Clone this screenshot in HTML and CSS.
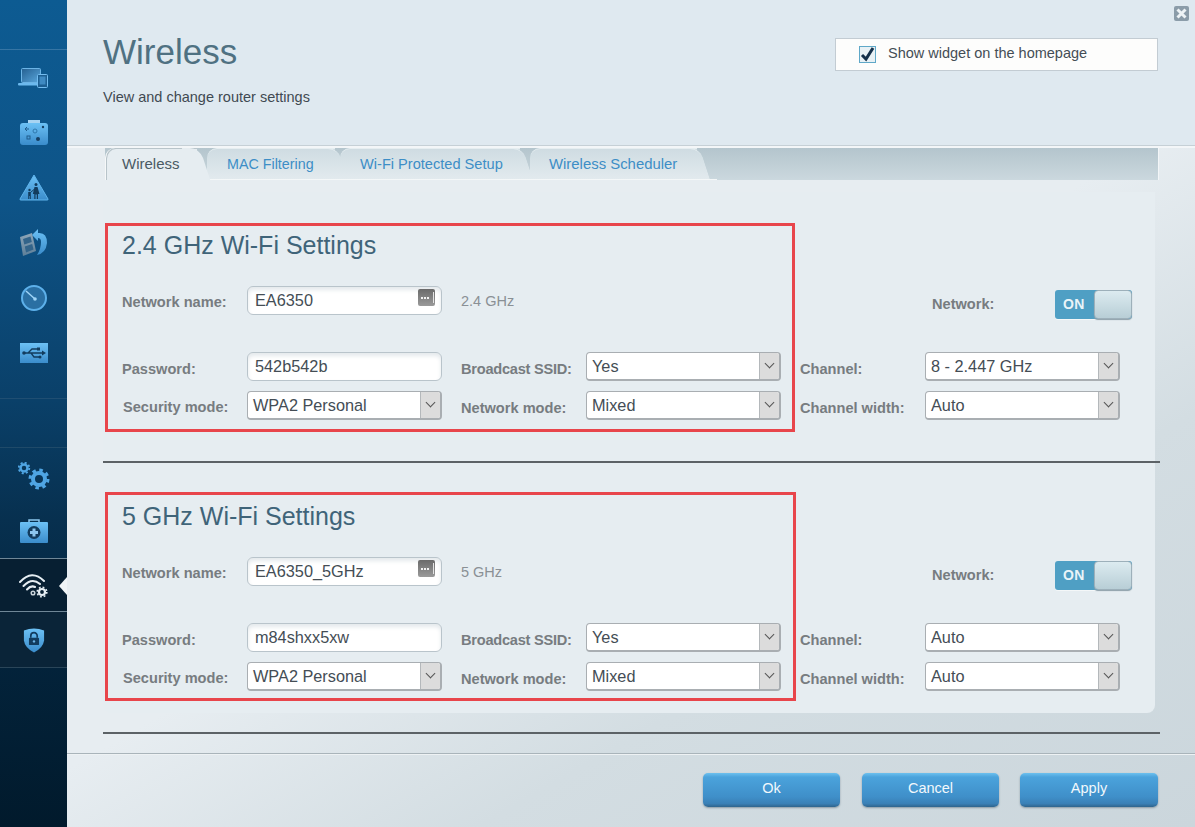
FILE: index.html
```html
<!DOCTYPE html>
<html lang="en">
<head>
<meta charset="UTF-8" />
<meta name="viewport" content="width=device-width, initial-scale=1" />
<title>Wireless</title>
<link rel="stylesheet" href="styles.css">
</head>
<body>

<div class="app">
  <nav class="sidebar">
    <svg class="defs" width="0" height="0">
      <defs>
        <linearGradient id="blue" x1="0" y1="0" x2="0" y2="1">
          <stop offset="0" stop-color="#6cc1f5"/>
          <stop offset="1" stop-color="#3a8ccb"/>
        </linearGradient>
        <linearGradient id="gray" x1="0" y1="0" x2="0" y2="1">
          <stop offset="0" stop-color="#8fa6b8"/>
          <stop offset="1" stop-color="#5d7f99"/>
        </linearGradient>
        <linearGradient id="screen" x1="0" y1="0" x2="1" y2="1">
          <stop offset="0" stop-color="#245f90"/>
          <stop offset="1" stop-color="#5ba8de"/>
        </linearGradient>
      </defs>
    </svg>
    <div class="nav-top"></div>

    <div class="nav-item">
      <svg width="32" height="20" viewBox="0 0 32 20">
        <rect x="3.500" y="0.500" width="19" height="14" rx="1" fill="url(#screen)" stroke="#6cb4e6"/>
        <rect x="0" y="15" width="26" height="2.500" rx="1" fill="#6cb9ee"/>
        <rect x="19.500" y="6.500" width="10" height="13" rx="1" fill="#1d5f92" stroke="#74bdf0"/>
        <rect x="21.500" y="8.500" width="6" height="8" fill="#3f8ac2"/>
      </svg>
    </div>
    <div class="nav-item">
      <svg width="30" height="26" viewBox="0 0 30 26">
        <rect x="9" y="0" width="12" height="4" fill="#a8d4f2"/>
        <rect x="1" y="3" width="28" height="22" rx="3" fill="url(#blue)"/>
        <path d="M6 9 H10 M8 7 L6 9 L8 11" fill="none" stroke="#1f5c8c"/>
        <circle cx="24" cy="7" r="1.200" fill="#163f63"/>
        <circle cx="16" cy="11" r="2" fill="none" stroke="#2f78ad"/>
        <rect x="8" y="16" width="3" height="3" fill="none" stroke="#1f5c8c"/>
        <circle cx="19" cy="19" r="2" fill="#163f63"/>
      </svg>
    </div>
    <div class="nav-item">
      <svg width="30" height="27" viewBox="0 0 30 27">
        <path d="M15 1 L29 25 Q29.500 26 28 26 L2 26 Q0.500 26 1 25 Z" fill="url(#blue)" stroke="#5eb3ec" stroke-linejoin="round"/>
        <circle cx="17" cy="10.500" r="1.500" fill="#123c5e"/>
        <path d="M15.500 13 H18.500 L20.500 20 H19 V25 H17.800 V20.500 H16.500 V25 H15.300 V20 H13.800 Z" fill="#123c5e"/>
        <circle cx="10.500" cy="16" r="1.200" fill="#123c5e"/>
        <path d="M9.200 18 H11.800 V25 H10.800 V22 H10.200 V25 H9.200 Z" fill="#123c5e"/>
        <path d="M11.500 18.500 L15 15.500" stroke="#123c5e"/>
      </svg>
    </div>
    <div class="nav-item">
      <svg width="30" height="28" viewBox="0 0 30 28">
        <path d="M1 8 L13 4 L17 22 L4 27 Z" fill="url(#gray)"/>
        <path d="M4 10 L11.500 7.500 L12.800 13 L5.300 15.500 Z M5.800 17.500 L13.200 15 L14.500 20.500 L7 23.500 Z" fill="#33648a"/>
        <path d="M19 4 Q28 3 28 14 Q27 24 18 26 Q22 20 22 13 Q22 9 19 9 V12 L13 6 L19 0 Z" fill="url(#blue)"/>
      </svg>
    </div>
    <div class="nav-item">
      <svg width="28" height="28" viewBox="0 0 28 28">
        <circle cx="14" cy="14" r="12" fill="#2a6fa3" stroke="#5db0ea" stroke-width="2"/>
        <path d="M6 7 L15 15" stroke="#9fd4f7" stroke-width="1.500"/>
        <circle cx="15" cy="15" r="1.800" fill="#9fd4f7"/>
      </svg>
    </div>
    <div class="nav-item">
      <svg width="28" height="20" viewBox="0 0 28 20">
        <rect x="0" y="0" width="28" height="20" fill="url(#blue)"/>
        <path d="M3 10 H24 M8 10 L12 6 H17 M11 10 L14 14 H19" stroke="#123c5e" stroke-width="1.300" fill="none"/>
        <path d="M22 7.500 L26 10 L22 12.500 Z" fill="#123c5e"/>
        <circle cx="4" cy="10" r="1.800" fill="#123c5e"/>
        <rect x="17" y="4.500" width="3" height="3" fill="#123c5e"/>
        <circle cx="20" cy="14" r="1.500" fill="#123c5e"/>
      </svg>
    </div>

    <div class="nav-gap"></div>

    <div class="nav-item nav-item-tall">
      <svg width="32" height="28" viewBox="0 0 32 28">
        <circle cx="6" cy="6" r="3.500" fill="none" stroke="#4fa5e3" stroke-width="2.500"/>
        <circle cx="6" cy="6" r="5.300" fill="none" stroke="#4fa5e3" stroke-width="1.800" stroke-dasharray="2.100 2.060"/>
        <circle cx="21" cy="17" r="6" fill="none" stroke="#4fa5e3" stroke-width="4"/>
        <circle cx="21" cy="17" r="9" fill="none" stroke="#4fa5e3" stroke-width="3" stroke-dasharray="3.500 3.570"/>
      </svg>
    </div>
    <div class="nav-item">
      <svg width="28" height="24" viewBox="0 0 28 24">
        <path d="M9 4 V1 H19 V4" fill="none" stroke="#8cc6ee" stroke-width="1.500"/>
        <rect x="0" y="3" width="28" height="21" rx="1" fill="url(#blue)"/>
        <circle cx="14" cy="13.500" r="6.500" fill="#123c5e"/>
        <path d="M12.500 9.500 H15.500 V12 H18 V15 H15.500 V17.500 H12.500 V15 H10 V12 H12.500 Z" fill="#8cc6ee"/>
      </svg>
    </div>
    <div class="nav-item nav-item-active">
      <svg width="30" height="26" viewBox="0 0 30 26">
        <path d="M1 10 Q13 -3 25 9 M4.500 14 Q13 5 21 12 M8 17.500 Q12 13 16 15" fill="none" stroke="#e6eef3" stroke-width="2" stroke-linecap="round"/>
        <circle cx="14" cy="21" r="1.800" fill="none" stroke="#c9d3da" stroke-width="1.500"/>
        <circle cx="23" cy="20" r="3" fill="none" stroke="#e6eef3" stroke-width="2.200"/>
        <circle cx="23" cy="20" r="4.800" fill="none" stroke="#e6eef3" stroke-width="1.600" stroke-dasharray="1.800 1.970"/>
      </svg>
      <span class="nav-pointer"></span>
    </div>
    <div class="nav-item nav-item-dark">
      <svg width="22" height="26" viewBox="0 0 24 27">
        <path d="M1 3 Q12 -1 23 3 V14 Q22 22 12 27 Q2 22 1 14 Z" fill="url(#blue)"/>
        <path d="M8.500 11 V9 A3.500 3.500 0 0 1 15.500 9 V11" fill="none" stroke="#123c5e" stroke-width="1.800"/>
        <rect x="6.500" y="11" width="11" height="8" rx="1" fill="#123c5e"/>
        <circle cx="12" cy="15" r="1.300" fill="#6cb4e6"/>
      </svg>
    </div>
  </nav>

  <div class="main">
    <header class="head">
      <div class="head-text">
        <h1>Wireless</h1>
        <p>View and change router settings</p>
      </div>
      <label class="widget-box">
        <span class="checkbox">
          <svg width="17" height="17" viewBox="0 0 17 17">
            <path d="M3 9 L7 13 L14 2" fill="none" stroke="#14304a" stroke-width="3"/>
          </svg>
        </span>
        Show widget on the homepage
      </label>
      <div class="close">
        <svg width="15" height="15" viewBox="0 0 15 15">
          <path d="M3.500 3.500 L11.500 11.500 M11.500 3.500 L3.500 11.500" stroke="#eef3f6" stroke-width="3"/>
        </svg>
      </div>
    </header>

    <div class="tabs">
      <a class="tab tab-active">Wireless</a>
      <a class="tab tab-mac">MAC Filtering</a>
      <a class="tab tab-wps">Wi-Fi Protected Setup</a>
      <a class="tab tab-sched">Wireless Scheduler</a>
    </div>

    <div class="panel">
      <section class="wifi wifi-first">
        <div class="mark mark-first"></div>
        <h2>2.4 GHz Wi-Fi Settings</h2>
        <div class="form-grid">
          <label class="lbl lbl-up">Network name:</label>
          <div class="text-field">
            <input type="text" value="EA6350">
            <span class="key-icon"><i></i><i></i><i></i><u></u></span>
          </div>
          <span class="band">2.4 GHz</span>
          <span></span>
          <span></span>
          <div class="net-toggle">
            <span class="lbl">Network:</span>
            <div class="toggle"><b>ON</b><span class="knob"></span></div>
          </div>

          <label class="lbl">Password:</label>
          <div class="text-field"><input type="text" value="542b542b"></div>
          <label class="lbl lbl-tight">Broadcast SSID:</label>
          <div class="select"><span>Yes</span><em></em></div>
          <label class="lbl">Channel:</label>
          <div class="select"><span>8 - 2.447 GHz</span><em></em></div>

          <label class="lbl lbl-up lbl-sec">Security mode:</label>
          <div class="select"><span>WPA2 Personal</span><em></em></div>
          <label class="lbl">Network mode:</label>
          <div class="select"><span>Mixed</span><em></em></div>
          <label class="lbl">Channel width:</label>
          <div class="select"><span>Auto</span><em></em></div>
        </div>
      </section>

      <hr class="rule">

      <section class="wifi">
        <div class="mark mark-second"></div>
        <h2>5 GHz Wi-Fi Settings</h2>
        <div class="form-grid">
          <label class="lbl lbl-up">Network name:</label>
          <div class="text-field">
            <input type="text" value="EA6350_5GHz">
            <span class="key-icon"><i></i><i></i><i></i><u></u></span>
          </div>
          <span class="band">5 GHz</span>
          <span></span>
          <span></span>
          <div class="net-toggle">
            <span class="lbl">Network:</span>
            <div class="toggle"><b>ON</b><span class="knob"></span></div>
          </div>

          <label class="lbl">Password:</label>
          <div class="text-field"><input type="text" value="m84shxx5xw"></div>
          <label class="lbl lbl-tight">Broadcast SSID:</label>
          <div class="select"><span>Yes</span><em></em></div>
          <label class="lbl">Channel:</label>
          <div class="select"><span>Auto</span><em></em></div>

          <label class="lbl lbl-up lbl-sec">Security mode:</label>
          <div class="select"><span>WPA2 Personal</span><em></em></div>
          <label class="lbl">Network mode:</label>
          <div class="select"><span>Mixed</span><em></em></div>
          <label class="lbl">Channel width:</label>
          <div class="select"><span>Auto</span><em></em></div>
        </div>
      </section>
    </div>

    <hr class="rule rule-last">

    <footer class="foot">
      <button class="btn-ok">Ok</button>
      <button>Cancel</button>
      <button class="btn-apply">Apply</button>
    </footer>
  </div>
</div>

</body>
</html>
```

FILE: styles.css
```css
* { box-sizing: border-box; }
html, body { margin: 0; height: 100%; overflow: hidden; }
body { font-family: "Liberation Sans", Arial, sans-serif; color: #444d55; background: #e5ecf0; }

.app { display: flex; width: 1195px; height: 827px; }

/* left nav */
.sidebar { width: 67px; flex: none; display: flex; flex-direction: column; background: linear-gradient(#0d5b92 0, #0e5488 200px, #0a4069 400px, #07304f 520px, #03233b 660px, #011a2c 827px); }
.defs { display: block; }
.nav-top { height: 50px; border-bottom: 1px solid #3675a4; }
.nav-item { height: 55px; display: flex; align-items: center; justify-content: center; position: relative; }
.nav-gap { height: 19px; border-bottom: 1px solid #1f4e72; margin-bottom: 48px; }
.nav-item-tall { height: 56px; border-top: 1px solid #1f4a69; }
.nav-item-active { height: 54px; background: #071f32; border-top: 1px solid #6f8797; border-bottom: 1px solid #6f8797; }
.nav-item-dark { height: 56px; background: #0a2438; border-bottom: 1px solid #2a4558; }
.nav-pointer { position: absolute; right: 0; top: 18px; border: 9px solid transparent; border-left: 0; border-right: 8px solid #f0f4f6; }

/* main column */
.main { flex: 1; padding: 0 35px 0 36px; background: linear-gradient(150deg, #e7edf1 52%, #d3dde2 72%, #cbd6dc 100%); display: flex; flex-direction: column; }

.head { margin: 0 -35px 0 -36px; padding-left: 36px; height: 148px; flex: none; display: flex; align-items: flex-start; background: #dfe9f0; border-bottom: 2px solid #f3f6f8; box-shadow: inset 0 -1px 0 #c6d0d6; }
.head-text { flex: 1; }
.head h1 { margin: 32px 0 0; font-size: 35px; line-height: 40px; font-weight: normal; color: #4f7182; }
.head p { margin: 16px 0 0; font-size: 14.500px; line-height: 18px; color: #3f4a52; }
.widget-box { margin-top: 38px; width: 323px; height: 33px; padding: 6px 0 0 23px; display: flex; gap: 12px; font-size: 14.500px; line-height: 16px; background: #fdfdfc; border: 1px solid #c3ccd3; }
.checkbox { width: 17px; height: 17px; flex: none; margin-top: 1px; background: #e8f1f5; border: 1px solid #5fa8c8; }
.checkbox svg { display: block; margin: -1px; }
.close { width: 15px; height: 15px; margin: 6px 6px 0 16px; flex: none; border-radius: 2px; background: #8b9ca9; }
.close svg { display: block; }

/* tabs */
.tabs { height: 32px; flex: none; margin-left: 2px; width: 1054px; display: flex; background: linear-gradient(#b4c5cd, #cbd8de); border-right: 1px solid #f3f6f8; }
.tab { position: relative; height: 32px; padding: 6px 0 0 20px; font-size: 14.600px; line-height: 18px; color: #3d8ec6; background: linear-gradient(#cfdce2, #e2eaee); border-top: 1px solid #e6eef1; border-bottom: 1px solid #f4f7f8; border-radius: 10px 0 0 0; }
.tab::after { content: ""; position: absolute; top: -1px; bottom: -1px; right: -8px; width: 18px; background: inherit; border-top: 1px solid #e6eef1; border-bottom: 1px solid #f4f7f8; border-radius: 0 10px 0 0; transform: skewX(18deg); }
.tab-active { width: 92px; margin-right: 10px; padding: 7px 0 0 16px; font-size: 15px; color: #4a5a64; background: #e6edf1; border: 0; border-left: 1px solid #f6f8f9; box-shadow: inset 1px 1px 0 #b8c4ca; z-index: 2; }
.tab-active::after { border: 0; top: 0; bottom: 0; right: -8px; }
.tab-mac { width: 128px; margin-right: 5px; font-size: 14.300px; }
.tab-wps { width: 180px; margin-right: 10px; }
.tab-sched { width: 167px; padding-left: 19px; font-size: 14.900px; }
.tab-sched::before { content: ""; position: absolute; left: 100%; bottom: -1px; width: 20px; height: 1px; background: #f4f7f8; }

/* settings panel */
.panel { margin-top: 12px; flex: none; width: 1052px; height: 521px; background: #e6edf1; border-radius: 0 0 8px 8px; }
.wifi { position: relative; padding: 38px 0 0 19px; }
.wifi-first { height: 269px; }
.wifi h2 { margin: 0 0 26px; font-size: 25px; line-height: 30px; font-weight: normal; color: #3f6479; }
.form-grid { display: grid; grid-template-columns: 125px 214px 125px 214px 125px 195px; grid-template-rows: 56px 29px 29px; row-gap: 10px; align-items: start; }
.lbl { font-size: 14.600px; line-height: 18px; padding-top: 8px; font-weight: bold; color: #777c80; white-space: nowrap; }
.lbl-up { padding-top: 7px; }
.lbl-sec { padding-left: 1px; }
.lbl-tight { letter-spacing: -0.25px; }
.band { font-size: 14.500px; line-height: 18px; padding-top: 6px; color: #8a9095; }

.text-field { position: relative; width: 195px; height: 29px; }
.text-field input { display: block; width: 100%; height: 29px; padding: 0 7px; margin: 0; font: 16.300px "Liberation Sans", Arial, sans-serif; color: #444d55; background: #fff; border: 1px solid #b9c4cb; border-radius: 6px; box-shadow: inset 0 3px 4px #e4e9ec; outline: none; }
.key-icon { position: absolute; right: 7px; top: 3px; width: 17px; height: 17px; padding: 0 1px 0 3px; display: flex; align-items: center; gap: 1px; background: linear-gradient(#6a6a6a, #9a9a9a); border-radius: 2px; }
.key-icon i { width: 2px; height: 2px; background: #f2f2f2; }
.key-icon u { width: 1px; height: 11px; margin-left: auto; background: #e4e4e4; }

.select { display: flex; width: 195px; height: 29px; font-size: 16.300px; line-height: 26px; color: #444d55; background: #fff; border: 1px solid #a9aeb2; border-right-width: 2px; border-bottom-width: 2px; border-radius: 4px; overflow: hidden; }
.select span { flex: 1; padding-left: 5px; }
.select em { position: relative; width: 20px; flex: none; background: #dcdcdc; border-left: 1px solid #b4b8bb; }
.select em::after { content: ""; position: absolute; left: 6px; top: 7px; width: 6px; height: 6px; border-right: 1px solid #555; border-bottom: 1px solid #555; transform: rotate(45deg); }

.net-toggle { display: flex; width: 207px; padding: 4px 0 0 7px; }
.net-toggle .lbl { width: 123px; padding-top: 5px; }
.toggle { display: flex; width: 77px; height: 29px; flex: none; background: #4f9fc4; border-radius: 3px; box-shadow: 0 1px 0 #f4f7f8; }
.toggle b { width: 39px; padding-left: 8px; font-size: 14px; line-height: 29px; letter-spacing: 0.3px; color: #e9f4f8; }
.knob { width: 38px; height: 29px; flex: none; background: linear-gradient(#dcebf0, #b8ced6); border: 1px solid #9db0ba; border-radius: 4px; box-shadow: 0 1px 1px #8c9ea8; }

.mark { position: absolute; left: 2px; height: 209px; border: 3px solid #e8454b; pointer-events: none; }
.mark-first { top: 31px; width: 690px; }
.mark-second { top: 29px; width: 691px; }

.rule { width: 1057px; height: 2px; margin: 0; border: 0; background: #5c6266; }
.rule-last { flex: none; margin-top: 19px; }

/* buttons */
.foot { margin: 19px -35px 0 -36px; padding: 19px 37px 0 0; flex: 1; display: flex; justify-content: flex-end; align-items: flex-start; gap: 21px; border-top: 1px solid #a9b4ba; box-shadow: inset 0 1px 0 #eef2f4; }
.foot button { width: 137px; height: 34px; padding: 0 0 4px; font: 14.500px "Liberation Sans", Arial, sans-serif; color: #f2f8fc; background: linear-gradient(#6cc0ee 0, #4ba3dc 12%, #3f8fc9 70%, #3a80b6 90%, #2f648c 100%); border: 0; border-radius: 5px; box-shadow: 0 1px 2px #8b9aa4; }
.foot .btn-ok { margin-right: 1px; }
.foot .btn-apply { width: 138px; }
```
